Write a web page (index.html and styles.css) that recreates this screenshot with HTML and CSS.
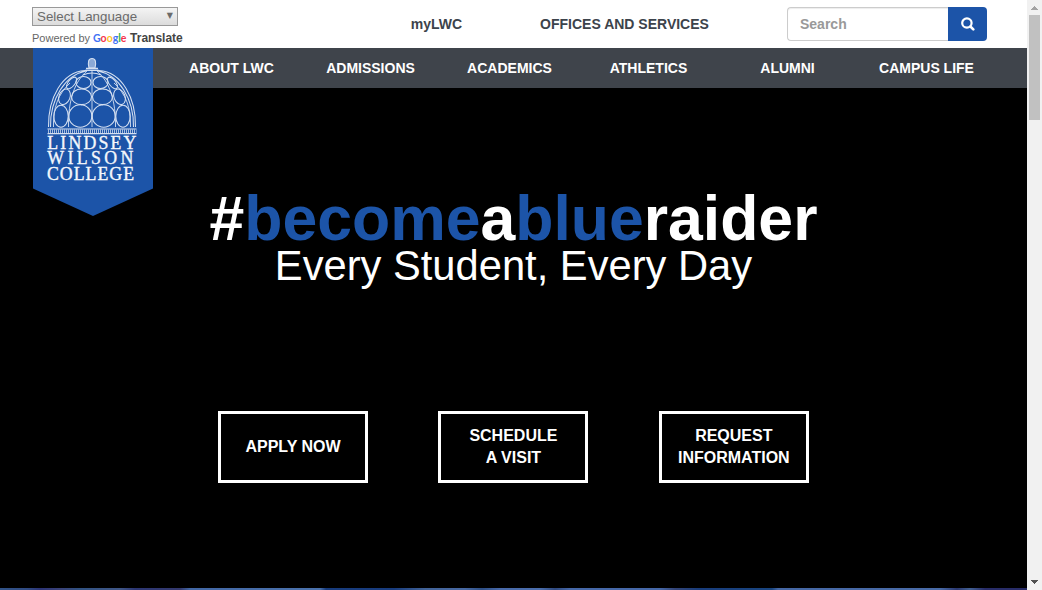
FILE: index.html
```
<!DOCTYPE html>
<html lang="en">
<head>
<meta charset="utf-8">
<title>Lindsey Wilson College</title>
<link rel="stylesheet" href="styles.css">
</head>
<body>
<div class="page">
  <header class="topbar">
    <div class="translate">
      <div class="language"><span>Select Language</span><span class="arrow">▼</span></div>
      <div class="powered">Powered by
        <svg class="google" width="34" height="14" viewBox="0 0 34 14"><text x="0" y="11" textLength="33.5" lengthAdjust="spacingAndGlyphs"><tspan fill="#4272f5">G</tspan><tspan fill="#f5364c">o</tspan><tspan fill="#ffc425">o</tspan><tspan fill="#4272f5">g</tspan><tspan fill="#2eb550">l</tspan><tspan fill="#f5364c">e</tspan></text></svg>
        <b>Translate</b>
      </div>
    </div>
    <a class="link mylwc">myLWC</a>
    <a class="link offices">OFFICES AND SERVICES</a>
    <div class="search">
      <div class="field">Search</div>
      <div class="submit"><svg width="14" height="14" viewBox="0 0 14 14"><circle cx="5.900" cy="6" r="4.700" fill="none" stroke="#fff" stroke-width="2.200"/><path d="M9.400 9.500L12.300 12.400" stroke="#fff" stroke-width="2.600" stroke-linecap="round"/></svg></div>
    </div>
  </header>
  <nav class="nav">
    <a>ABOUT LWC</a><a>ADMISSIONS</a><a>ACADEMICS</a><a>ATHLETICS</a><a>ALUMNI</a><a>CAMPUS LIFE</a>
    <svg class="logo" width="120" height="168" viewBox="0 0 120 168">
      <path d="M0 0H120V140.500L60 168L0 140.500Z" fill="#1c54a8"/>
      <g fill="none" stroke="#d5e0f1" stroke-width="1.050">
        <path d="M56 20C54.500 14 55.500 10.500 59 10.500C62.500 10.500 63.500 14 62 20Z" fill="#8ba9d6"/>
        <path d="M53 20.500H65M52 22.300H66" stroke-width="1.300"/>
        <path d="M15.500 79C15 50 29 24 52 22.500M102.500 79C103 50 89 24 66 22.500M17.500 79C17 51 32 27 53 23M100.500 79C101 51 86 27 65 23"/>
        <path d="M20.500 79C20 60 25 46 37 35M97.500 79C98 60 93 46 81 35M35.500 79C35 52 42 33 54 23M82.500 79C83 52 76 33 64 23M59 23V79" stroke-width=".9"/>
        <ellipse cx="47.300" cy="68" rx="11.500" ry="11.300"/><ellipse cx="70.700" cy="68" rx="11.500" ry="11.300"/>
        <ellipse cx="28" cy="68.300" rx="7.200" ry="11"/><ellipse cx="90" cy="68.300" rx="7.200" ry="11"/>
        <ellipse cx="48.500" cy="48.800" rx="10" ry="7.800"/><ellipse cx="69.500" cy="48.800" rx="10" ry="7.800"/>
        <ellipse cx="31.500" cy="48.800" rx="5.500" ry="8" transform="rotate(22 31.500 48.800)"/><ellipse cx="86.500" cy="48.800" rx="5.500" ry="8" transform="rotate(-22 86.500 48.800)"/>
        <ellipse cx="50.500" cy="34.500" rx="7.500" ry="6"/><ellipse cx="67.500" cy="34.500" rx="7.500" ry="6"/>
        <ellipse cx="38.500" cy="35" rx="3.300" ry="7" transform="rotate(38 38.500 35)"/><ellipse cx="79.500" cy="35" rx="3.300" ry="7" transform="rotate(-38 79.500 35)"/>
        <path d="M50 27Q59 23 68 27"/>
        <path d="M14.500 81H103.500M14.500 85.600H103.500"/>
        <path d="M15 83.300H103.500" stroke-width="3.800" stroke-dasharray="1 1" opacity=".75"/>
      </g>
      <g class="wordmark">
        <text x="14.300" y="101" textLength="89" lengthAdjust="spacing">LINDSEY</text>
        <text x="14.300" y="116.300" textLength="86" lengthAdjust="spacing">WILSON</text>
        <text x="14" y="131.600" textLength="87" lengthAdjust="spacing">COLLEGE</text>
      </g>
    </svg>
  </nav>
  <main class="hero">
    <h1>#<span>become</span>a<span>blue</span>raider</h1>
    <p>Every Student, Every Day</p>
    <div class="actions">
      <a>APPLY NOW</a><a>SCHEDULE<br>A VISIT</a><a>REQUEST<br>INFORMATION</a>
    </div>
  </main>
  <div class="photo"></div>
</div>
<div class="scrollbar">
  <svg width="15" height="15" viewBox="0 0 15 15" shape-rendering="crispEdges"><path d="M7 6H8V7H9V8H10V9H11V10H4V9H5V8H6V7H7Z" fill="#a3a3a3"/></svg>
  <div class="thumb"></div>
  <svg class="down" width="15" height="15" viewBox="0 0 15 15" shape-rendering="crispEdges"><path d="M4 5H11V6H10V7H9V8H8V9H7V8H6V7H5V6H4Z" fill="#505050"/></svg>
</div>
</body>
</html>
```
FILE: styles.css
```
* { box-sizing: border-box; }
body { margin: 0; display: flex; width: 1042px; height: 590px; overflow: hidden; background: #fff; font-family: "Liberation Sans", Arial, sans-serif; font-size: 14px; }
.page { width: 1027px; height: 590px; display: flex; flex-direction: column; }
.topbar { height: 48px; display: flex; padding-left: 32px; flex: none; }
.translate { width: 302px; padding-top: 7px; flex: none; }
.language { width: 146px; height: 19px; border: 1px solid #999; background: linear-gradient(#f4f4f4, #dcdcdc); color: #6b6b6b; font-size: 13.333px; line-height: 18px; padding: 0 4px; display: flex; justify-content: space-between; }
.arrow { font-size: 8px; line-height: 16px; font-family: "DejaVu Sans", sans-serif; }
.powered { display: flex; align-items: center; gap: 3px; height: 14px; margin-top: 5px; font-size: 11px; color: #666; white-space: nowrap; }
.powered b { font-size: 12px; color: #444; }
.google { font-family: Lato, sans-serif; font-size: 12px; font-weight: 700; }
.link { color: #3c434b; font-weight: 700; text-align: center; line-height: 48px; flex: none; }
.mylwc { width: 205px; }
.offices { width: 171px; }
.search { display: flex; width: 200px; height: 34px; margin: 7px 0 0 77px; }
.field { flex: 1; border: 1px solid #ccc; border-right: 0; border-radius: 4px 0 0 4px; box-shadow: inset 0 1px 1px rgba(0,0,0,.075); padding-left: 12px; color: #999; font-weight: 700; line-height: 32px; }
.submit { width: 39px; background: #1c54a8; border-radius: 0 4px 4px 0; display: flex; align-items: center; justify-content: center; }
.nav { height: 40px; background: #3f444b; display: flex; padding-left: 162px; position: relative; flex: none; }
.nav a { width: 139px; text-align: center; color: #fff; font-weight: 700; line-height: 40px; }
.logo { position: absolute; left: 33px; top: 0; }
.wordmark { fill: #f4f7fc; font-family: "Liberation Serif", serif; font-size: 17.8px; stroke: #f4f7fc; stroke-width: .35px; }
.hero { height: 500px; background: #000; color: #fff; text-align: center; padding-top: 99px; flex: none; }
.hero h1 { margin: 0; font-size: 62.5px; line-height: 63px; }
.hero h1 span { color: #1c54a8; }
.hero p { margin: -5px 0 0; font-size: 41.7px; line-height: 42px; }
.actions { display: flex; justify-content: center; gap: 70.4px; margin-top: 124px; padding-right: .2px; }
.actions a { width: 150px; height: 72px; border: 3px solid #fff; font-size: 16px; font-weight: 700; line-height: 22px; display: flex; align-items: center; justify-content: center; }
.photo { height: 2px; background: linear-gradient(90deg, #315387 0, #304b83 27px, #2c3476 40px, #3a4278 60px, #315282 80px, #405787 120px, #2c3673 135px, #34396e 180px, #4267a5 190px, #4b72ac 320px, #173b7c 326px, #183c7e 394px, #426398 425px, #4869a3 465px, #2e4f86 482px, #4869a9 500px, #4b6eac 540px, #304a80 555px, #4668a8 570px, #4668a8 660px, #344577 675px, #183c7b 700px, #194580 772px, #4567a4 778px, #496ba7 940px, #2b3870 957px, #426092 970px, #282c68 985px); }
.scrollbar { width: 15px; height: 590px; background: #f1f1f1; display: flex; flex-direction: column; align-items: center; }
.scrollbar svg { flex: none; }
.thumb { width: 11px; height: 105px; background: #c1c1c1; }
.down { margin-top: auto; }
```
